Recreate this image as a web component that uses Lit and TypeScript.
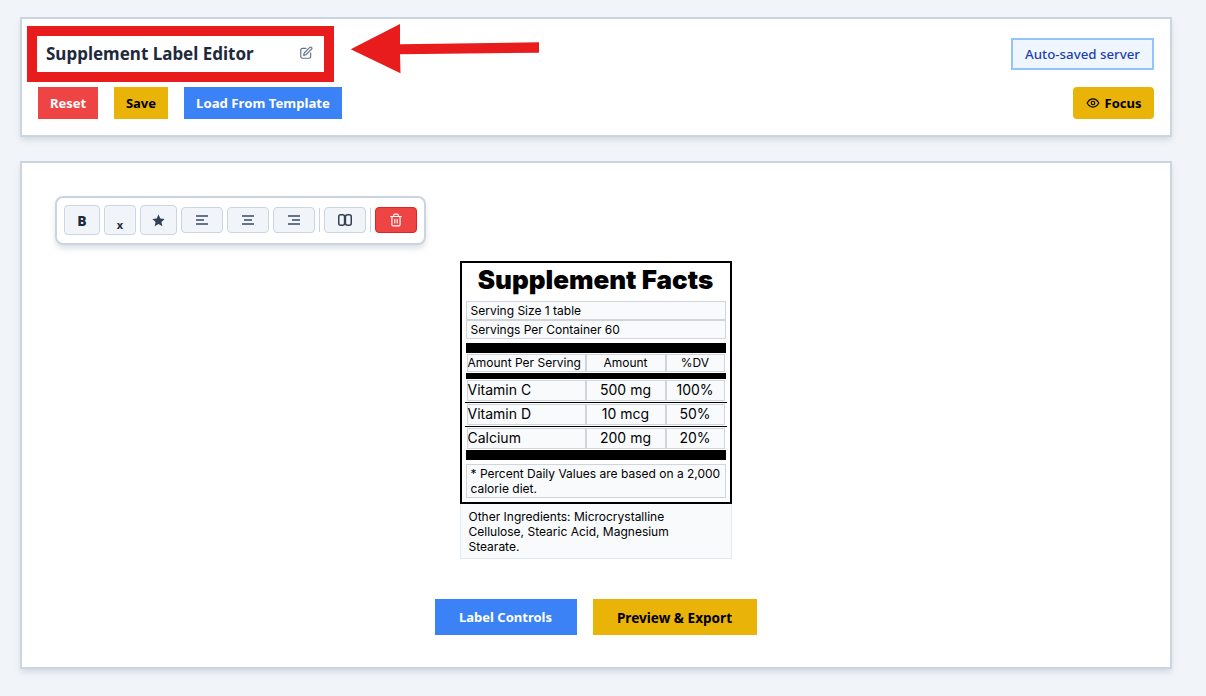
import { LitElement, html, css } from "lit";
import { customElement } from "lit/decorators.js";

@customElement("app-root")
export class AppRoot extends LitElement {
  static styles = css`
    :host { display: block; min-height: 696px; background: #f1f5f9; font-family: "Noto Sans", sans-serif; color: #1e293b; box-sizing: border-box; padding: 17px 34px 0 20px; position: relative; overflow: hidden; height: 696px; }
    * { box-sizing: border-box; }
    .card { background: #fff; border: 2px solid #cbd5e1; box-shadow: 0 4px 6px -1px rgba(100,116,139,.22); }
    .head { height: 120px; padding: 17px 16px 0 16px; display: flex; justify-content: space-between; }
    .left, .right { display: flex; flex-direction: column; }
    .right { align-items: flex-end; }
    .title { width: 287px; height: 36px; margin-left: -1px; padding: 0 8px 0 9px; display: flex; align-items: center; justify-content: space-between; font-size: 17px; font-weight: 700; color: #1e293b; }
    .title span { position: relative; top: -1px; }
    .title svg { width: 14px; height: 14px; color: #64748b; margin-right: 3px; margin-top: -2px; }
    .row { display: flex; gap: 16px; margin-top: 15px; }
    button { border: 0; font-family: inherit; font-weight: 700; font-size: 13px; padding: 0; display: flex; align-items: center; justify-content: center; }
    .a { height: 32px; }
    .red { background: #ef4444; color: #fff; width: 60px; }
    .yellow { background: #eab308; color: #000; width: 54px; }
    .blue { background: #3b82f6; color: #fff; width: 158px; }
    .wide { font-size: 13.2px; }
    .saved { width: 143px; height: 32px; margin-top: 2px; border: 2px solid #93c5fd; background: #eff6ff; color: #1e40af; font-size: 13.3px; font-weight: 500; display: flex; align-items: center; justify-content: center; }
    .focus { width: 81px; margin-top: 17px; background: #eab308; color: #000; border-radius: 4px; gap: 5px; }
    .focus svg { width: 14px; height: 14px; }
    .main { margin-top: 24px; height: 508px; padding: 33px 0 0 33px; position: relative; }
    .toolbar { width: 371px; height: 49px; border: 2px solid #cbd5e1; border-radius: 8px; background: #fff; box-shadow: 0 4px 6px -1px rgba(100,116,139,.25); padding: 0 7px; display: flex; align-items: center; gap: 4px; }
    .tb { background: #f1f5f9; border: 1px solid #cbd5e1; border-radius: 4px; color: #1e293b; }
    .tall { height: 30px; margin-top: -1px; }
    .short { height: 26px; width: 42px; margin-top: -1px; color: #64748b; }
    .tb svg { display: block; }
    .b { width: 36px; font-size: 14px; font-weight: 800; }
    .x { width: 32px; font-size: 11px; padding-top: 9px; font-weight: 700; }
    .star { width: 37px; color: #334155; }
    .sep { width: 1px; height: 24px; background: #cbd5e1; margin-top: -1px; }
    .cols { color: #334155; }
    .del { background: #ef4444; border-color: #dc2626; color: #fff; }
    .stack { width: 272px; margin: 16px auto 0; position: relative; left: -17px; font-family: Inter, sans-serif; color: #000; }
    .label { border: 2px solid #000; height: 243px; padding: 0 4px; background: #fff; }
    .h1 { font-size: 26px; line-height: 34px; font-weight: 900; text-align: center; height: 38px; margin: 0; color: #000; }
    .line { height: 19px; font-size: 12px; line-height: 17px; padding: 0 4px; border: 1px solid #d1d5db; background: #f8fafc; }
    .bar { background: #000; }
    .grid { display: grid; grid-template-columns: 119px 80px 59px; margin: 0 1px; }
    .grid > div { border: 1px solid #d1d5db; background: #f8fafc; white-space: nowrap; }
    .grid > div + div { text-align: center; }
    .ghead > div { height: 18px; font-size: 12px; line-height: 15px; }
    .gbody > div { height: 21px; font-size: 14px; line-height: 18px; }
    .rule { height: 1px; background: #000; margin: 1px -1px; }
    .note { margin-top: 4px; height: 34px; border: 1px solid #d1d5db; background: #f8fafc; padding: 1px 4px 0; font-size: 12px; line-height: 15px; }
    .other { height: 55px; border: 1px solid #e2e8f0; border-top: 0; background: #f8fafc; padding: 5px 8px; font-size: 12px; line-height: 15px; }
    .foot { position: relative; left: -17px; display: flex; gap: 16px; justify-content: center; margin-top: 40px; }
    .foot button { height: 36px; }
    .foot .blue { width: 142px; }
    .foot .yellow { width: 164px; font-size: 13.6px; }
    .mark { position: absolute; left: 27px; top: 26px; width: 307px; height: 56px; border: 10px solid #e81c1c; pointer-events: none; }
    .arrow { position: absolute; left: 345px; top: 20px; width: 200px; height: 60px; pointer-events: none; }
  `;

  private row(a: string, b: string, c: string) {
    return html`<div class="grid gbody"><div>${a}</div><div>${b}</div><div>${c}</div></div>`;
  }

  render() {
    return html`
      <section class="card head">
        <div class="left">
          <div class="title"><span>Supplement Label Editor</span>
            <svg viewBox="0 0 24 24" fill="none" stroke="currentColor" stroke-width="2" stroke-linecap="round" stroke-linejoin="round"><path d="M12 4H6a3 3 0 0 0-3 3v11a3 3 0 0 0 3 3h11a3 3 0 0 0 3-3v-6"/><path d="M18.5 2.500a2.100 2.100 0 0 1 3 3L12 15l-4 1 1-4z"/></svg>
          </div>
          <div class="row">
            <button class="a red">Reset</button>
            <button class="a yellow">Save</button>
            <button class="a blue wide">Load From Template</button>
          </div>
        </div>
        <div class="right">
          <div class="saved">Auto-saved server</div>
          <button class="a focus">
            <svg viewBox="0 0 24 24" fill="none" stroke="currentColor" stroke-width="2" stroke-linecap="round" stroke-linejoin="round"><path d="M2 12s4-7 10-7 10 7 10 7-4 7-10 7-10-7-10-7z"/><circle cx="12" cy="12" r="3"/></svg>
            Focus
          </button>
        </div>
      </section>
      <section class="card main">
        <div class="toolbar">
          <button class="tb tall b">B</button>
          <button class="tb tall x">x</button>
          <button class="tb tall star"><svg width="13" height="13" viewBox="0 0 24 24" fill="currentColor"><path d="M12 1l3.400 7.400 8 .9-6 5.400 1.700 8L12 18.600 4.900 22.700l1.700-8-6-5.400 8-.9z"/></svg></button>
          <button class="tb short"><svg width="14" height="14" viewBox="0 0 14 14" fill="none" stroke="currentColor" stroke-width="1.800"><path d="M1 3h12M1 7h8M1 11h12"/></svg></button>
          <button class="tb short"><svg width="14" height="14" viewBox="0 0 14 14" fill="none" stroke="currentColor" stroke-width="1.800"><path d="M1 3h12M3 7h8M1 11h12"/></svg></button>
          <button class="tb short"><svg width="14" height="14" viewBox="0 0 14 14" fill="none" stroke="currentColor" stroke-width="1.800"><path d="M1 3h12M5 7h8M1 11h12"/></svg></button>
          <div class="sep"></div>
          <button class="tb short cols"><svg width="14" height="12" viewBox="0 0 14 12" fill="none" stroke="currentColor" stroke-width="1.500"><rect x=".75" y=".75" width="5.800" height="10.500" rx="2"/><rect x="7.450" y=".75" width="5.800" height="10.500" rx="2"/></svg></button>
          <div class="sep"></div>
          <button class="tb short del"><svg width="14" height="14" viewBox="0 0 24 24" fill="none" stroke="currentColor" stroke-width="2" stroke-linecap="round" stroke-linejoin="round"><path d="M3 6h18M8 6V4a2 2 0 0 1 2-2h4a2 2 0 0 1 2 2v2M19 6v14a2 2 0 0 1-2 2H7a2 2 0 0 1-2-2V6M10 11v6M14 11v6"/></svg></button>
        </div>
        <div class="stack">
          <div class="label">
            <h1 class="h1">Supplement Facts</h1>
            <div class="line">Serving Size 1 table</div>
            <div class="line">Servings Per Container 60</div>
            <div class="bar" style="height:10px;margin-top:4px"></div>
            <div class="grid ghead" style="margin-top:1px"><div>Amount Per Serving</div><div>Amount</div><div>%DV</div></div>
            <div class="bar" style="height:6px;margin-top:1px"></div>
            <div style="height:1px"></div>
            ${this.row("Vitamin C", "500 mg", "100%")}
            <div class="rule"></div>
            ${this.row("Vitamin D", "10 mcg", "50%")}
            <div class="rule"></div>
            ${this.row("Calcium", "200 mg", "20%")}
            <div class="bar" style="height:10px;margin-top:1px"></div>
            <div class="note">* Percent Daily Values are based on a 2,000 calorie diet.</div>
          </div>
          <div class="other">Other Ingredients: Microcrystalline Cellulose, Stearic Acid, Magnesium Stearate.</div>
        </div>
        <div class="foot">
          <button class="blue">Label Controls</button>
          <button class="yellow">Preview &amp; Export</button>
        </div>
      </section>
      <div class="mark"></div>
      <svg class="arrow" viewBox="0 0 200 60"><path d="M5.700 29.300 L55 4 L55 24.300 L194 22.300 L194 32.700 L55 34.300 L55.500 53.300 Z" fill="#e81c1c"/></svg>
    `;
  }
}
